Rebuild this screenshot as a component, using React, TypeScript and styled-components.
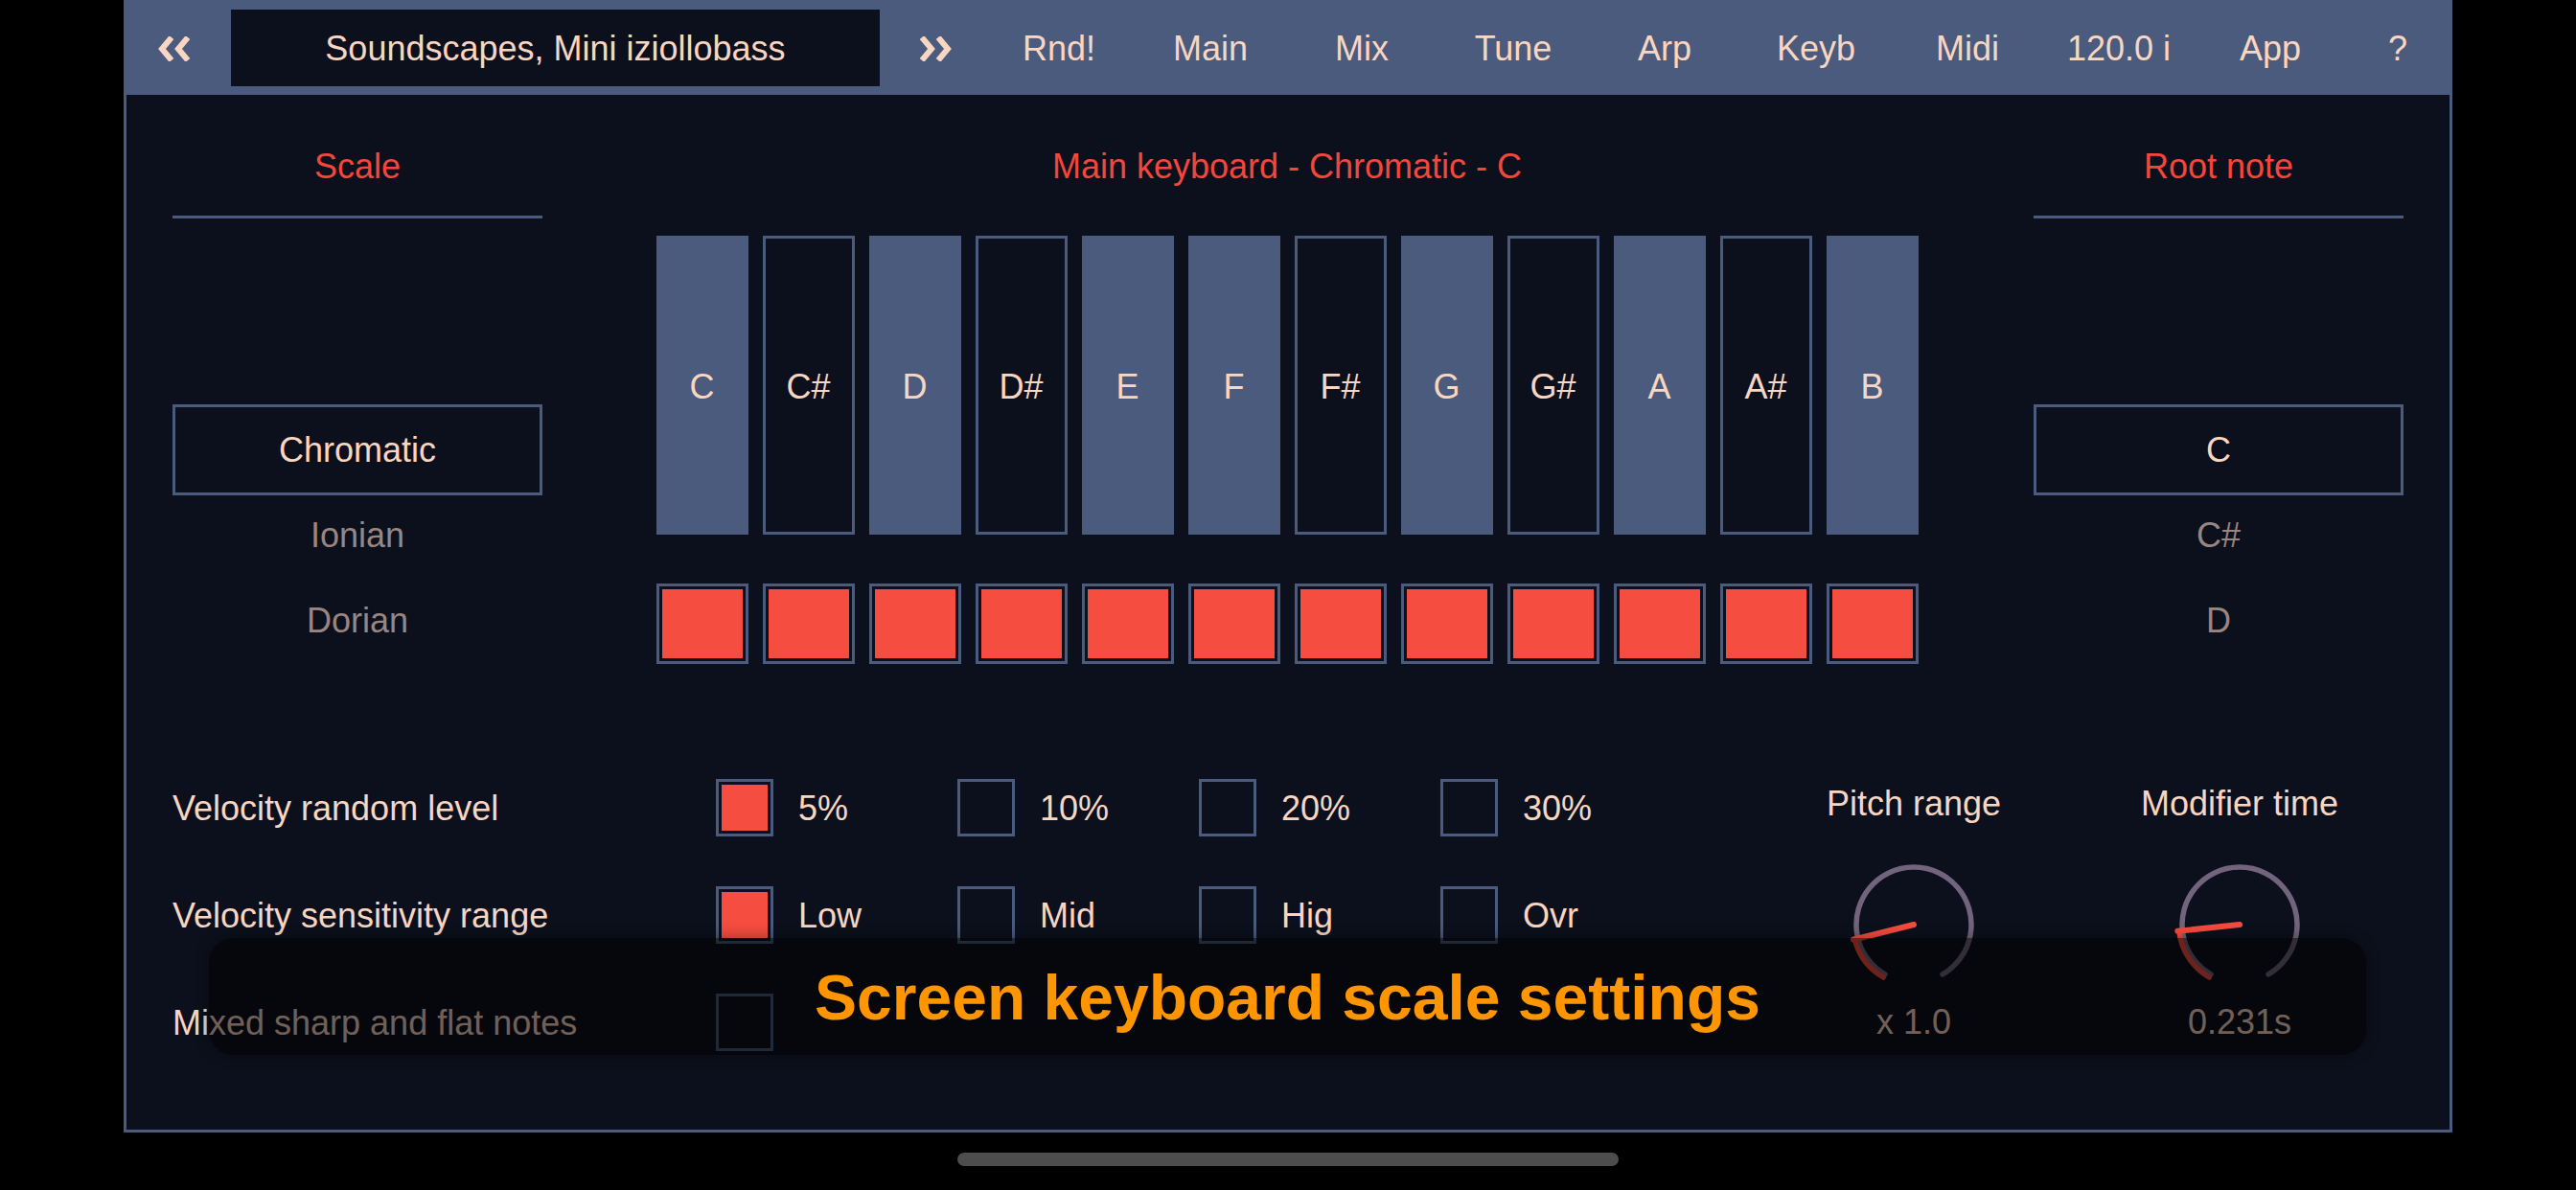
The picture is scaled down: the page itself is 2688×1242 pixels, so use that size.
import React from 'react';
import styled, { createGlobalStyle } from 'styled-components';

const BLUE = '#4a5b7d';
const BG = '#0c101c';
const PEACH = '#f8d6c2';
const RED = '#f4463a';
const PAD_RED = '#f54d3f';
const DIM = '#9a8580';

const GlobalStyle = createGlobalStyle`
  html, body { margin: 0; padding: 0; background: #000; }
  body {
    width: 2688px;
    height: 1242px;
    overflow: hidden;
    font-family: "Liberation Sans", Arial, Helvetica, sans-serif;
  }
  * { box-sizing: border-box; }
`;

const Screen = styled.div`
  width: 2688px;
  height: 1242px;
  background: #000;
  display: flex;
  flex-direction: column;
`;

const Frame = styled.div`
  position: relative;
  margin-left: 129px;
  width: 2430px;
  height: 1182px;
  border: 3px solid ${BLUE};
  border-top: none;
  background: ${BG};
  display: flex;
  flex-direction: column;
`;

const TopBar = styled.div`
  height: 99px;
  flex: none;
  background: ${BLUE};
  display: flex;
  align-items: center;
  padding-left: 31px;
`;

const Chevron = styled.svg`
  width: 37px;
  height: 26px;
  flex: none;
  margin-top: 2px;
`;

const TitleBox = styled.div`
  width: 677px;
  height: 80px;
  margin: 0 0 0 41px;
  background: ${BG};
  display: flex;
  align-items: center;
  justify-content: center;
  color: ${PEACH};
  font-size: 36px;
  padding-top: 2px;
  & + svg { margin-left: 40px; }
`;

const TabRow = styled.div`
  flex: 1;
  display: flex;
  margin-left: 31px;
  align-items: center;
  padding-top: 2px;
`;

const Tab = styled.div<{ $grow?: boolean }>`
  width: ${(p) => (p.$grow ? 'auto' : '158px')};
  flex: ${(p) => (p.$grow ? '1' : 'none')};
  text-align: center;
  color: ${PEACH};
  font-size: 36px;
  line-height: 42px;
`;

const Upper = styled.div`
  display: flex;
  justify-content: space-between;
  padding: 0 48px;
`;

const SideColumn = styled.div`
  width: 386px;
  display: flex;
  flex-direction: column;
`;

const SideHeader = styled.div`
  padding: 54px 0 30px;
  line-height: 42px;
  font-size: 36px;
  color: ${RED};
  text-align: center;
  border-bottom: 3px solid ${BLUE};
`;

const OptionList = styled.div`
  margin-top: 197px;
  padding: 0 3px;
  display: flex;
  flex-direction: column;
`;

const Option = styled.div<{ $selected?: boolean }>`
  height: 89px;
  display: flex;
  align-items: center;
  justify-content: center;
  font-size: 36px;
  color: ${(p) => (p.$selected ? PEACH : DIM)};
  outline: ${(p) => (p.$selected ? `3px solid ${BLUE}` : 'none')};
`;

const KeyboardColumn = styled.div`
  width: 1317px;
  margin-left: -2px;
  display: flex;
  flex-direction: column;
`;

const KeyboardTitle = styled.div`
  padding-top: 54px;
  line-height: 42px;
  font-size: 36px;
  color: ${RED};
  text-align: center;
`;

const KeyRow = styled.div`
  margin-top: 51px;
  display: grid;
  grid-template-columns: repeat(12, 96px);
  column-gap: 15px;
`;

const Key = styled.div<{ $sharp: boolean }>`
  height: 312px;
  display: flex;
  align-items: center;
  justify-content: center;
  padding-top: 4px;
  font-size: 36px;
  color: ${PEACH};
  background: ${(p) => (p.$sharp ? BG : BLUE)};
  border: ${(p) => (p.$sharp ? `3px solid ${BLUE}` : 'none')};
`;

const PadRow = styled.div`
  margin-top: 51px;
  display: grid;
  grid-template-columns: repeat(12, 96px);
  column-gap: 15px;
`;

const Pad = styled.div`
  height: 84px;
  border: 3px solid ${BLUE};
  padding: 3px;
  & > div {
    width: 100%;
    height: 100%;
    background: ${PAD_RED};
  }
`;

const Lower = styled.div`
  margin-top: 94px;
  display: flex;
  padding-left: 48px;
`;

const SettingsGrid = styled.div`
  display: grid;
  grid-template-columns: 567px repeat(4, 252px);
  grid-auto-rows: 112px;
  align-items: center;
`;

const RowLabel = styled.div`
  font-size: 36px;
  line-height: 42px;
  padding-top: 2px;
  color: ${PEACH};
  white-space: nowrap;
`;

const Choice = styled.div`
  display: flex;
  align-items: center;
  gap: 26px;
  font-size: 36px;
  color: ${PEACH};
  & > span { padding-top: 2px; }
`;

const CheckBox = styled.div<{ $on?: boolean }>`
  width: 60px;
  height: 60px;
  flex: none;
  border: 3px solid ${BLUE};
  padding: 3px;
  & > div {
    width: 100%;
    height: 100%;
    background: ${(p) => (p.$on ? PAD_RED : 'transparent')};
  }
`;

const KnobGroup = styled.div`
  display: flex;
  gap: 40px;
  margin-left: 92px;
`;

const KnobColumn = styled.div`
  width: 300px;
  display: flex;
  flex-direction: column;
  align-items: center;
`;

const KnobLabel = styled.div`
  margin-top: 31px;
  font-size: 36px;
  line-height: 42px;
  color: ${PEACH};
`;

const KnobSvg = styled.svg`
  margin-top: 30px;
  width: 150px;
  height: 150px;
`;

const KnobValue = styled.div`
  margin-top: 6px;
  font-size: 36px;
  line-height: 42px;
  color: ${PEACH};
`;

const Overlay = styled.div`
  position: absolute;
  left: 86px;
  top: 979px;
  width: 2251px;
  height: 122px;
  border-radius: 26px;
  background: rgba(0, 0, 0, 0.55);
  box-shadow: 0 0 14px 2px rgba(0, 0, 0, 0.3);
  display: flex;
  align-items: center;
  justify-content: center;
  padding-top: 2px;
  color: #ff9500;
  font-weight: bold;
  font-size: 66px;
`;

const HomeIndicator = styled.div`
  margin: 21px auto 0;
  width: 690px;
  height: 14px;
  border-radius: 7px;
  background: #4d4d4d;
`;

const polar = (cx: number, cy: number, r: number, deg: number) => {
  const a = (deg * Math.PI) / 180;
  return [cx + r * Math.sin(a), cy - r * Math.cos(a)];
};

const arcPath = (cx: number, cy: number, r: number, from: number, to: number) => {
  const [x1, y1] = polar(cx, cy, r, from);
  const [x2, y2] = polar(cx, cy, r, to);
  const large = to - from > 180 ? 1 : 0;
  return `M ${x1} ${y1} A ${r} ${r} 0 ${large} 1 ${x2} ${y2}`;
};

const Knob: React.FC<{ label: string; value: string; angle: number }> = ({ label, value, angle }) => {
  const c = 75;
  const [px, py] = polar(c, c, 65, angle);
  return (
    <KnobColumn>
      <KnobLabel>{label}</KnobLabel>
      <KnobSvg viewBox="0 0 150 150">
        <path d={arcPath(c, c, 60, -150, 150)} fill="none" stroke="#72647c" strokeWidth={5.5} strokeLinecap="round" />
        <path d={arcPath(c, c, 63.5, -150, angle)} fill="none" stroke="#f44c3e" strokeWidth={5.5} strokeLinecap="round" />
        <line x1={c} y1={c} x2={px} y2={py} stroke="#f44c3e" strokeWidth={6} strokeLinecap="round" />
      </KnobSvg>
      <KnobValue>{value}</KnobValue>
    </KnobColumn>
  );
};

const LeftChevron = () => (
  <Chevron viewBox="0 0 37 26">
    <polyline points="16,1 6,13 16,25" fill="none" stroke={PEACH} strokeWidth={6} strokeLinejoin="miter" />
    <polyline points="33,1 23,13 33,25" fill="none" stroke={PEACH} strokeWidth={6} strokeLinejoin="miter" />
  </Chevron>
);

const RightChevron = () => (
  <Chevron viewBox="0 0 37 26">
    <polyline points="4,1 14,13 4,25" fill="none" stroke={PEACH} strokeWidth={6} strokeLinejoin="miter" />
    <polyline points="21,1 31,13 21,25" fill="none" stroke={PEACH} strokeWidth={6} strokeLinejoin="miter" />
  </Chevron>
);

const notes = ['C', 'C#', 'D', 'D#', 'E', 'F', 'F#', 'G', 'G#', 'A', 'A#', 'B'];
const tabs = ['Rnd!', 'Main', 'Mix', 'Tune', 'Arp', 'Keyb', 'Midi', '120.0 i', 'App'];

const rows: { label: string; options: { text: string; on: boolean }[] }[] = [
  {
    label: 'Velocity random level',
    options: [
      { text: '5%', on: true },
      { text: '10%', on: false },
      { text: '20%', on: false },
      { text: '30%', on: false },
    ],
  },
  {
    label: 'Velocity sensitivity range',
    options: [
      { text: 'Low', on: true },
      { text: 'Mid', on: false },
      { text: 'Hig', on: false },
      { text: 'Ovr', on: false },
    ],
  },
  {
    label: 'Mixed sharp and flat notes',
    options: [{ text: '', on: false }],
  },
];

export default function App() {
  return (
    <Screen>
      <GlobalStyle />
      <Frame>
        <TopBar>
          <LeftChevron />
          <TitleBox>Soundscapes, Mini iziollobass</TitleBox>
          <RightChevron />
          <TabRow>
            {tabs.map((t) => (
              <Tab key={t}>{t}</Tab>
            ))}
            <Tab $grow>?</Tab>
          </TabRow>
        </TopBar>

        <Upper>
          <SideColumn>
            <SideHeader>Scale</SideHeader>
            <OptionList>
              <Option $selected>Chromatic</Option>
              <Option>Ionian</Option>
              <Option>Dorian</Option>
            </OptionList>
          </SideColumn>

          <KeyboardColumn>
            <KeyboardTitle>Main keyboard - Chromatic - C</KeyboardTitle>
            <KeyRow>
              {notes.map((n) => (
                <Key key={n} $sharp={n.includes('#')}>
                  {n}
                </Key>
              ))}
            </KeyRow>
            <PadRow>
              {notes.map((n) => (
                <Pad key={n}>
                  <div />
                </Pad>
              ))}
            </PadRow>
          </KeyboardColumn>

          <SideColumn>
            <SideHeader>Root note</SideHeader>
            <OptionList>
              <Option $selected>C</Option>
              <Option>C#</Option>
              <Option>D</Option>
            </OptionList>
          </SideColumn>
        </Upper>

        <Lower>
          <SettingsGrid>
            {rows.map((r) => (
              <React.Fragment key={r.label}>
                <RowLabel>{r.label}</RowLabel>
                {r.options.map((o, i) => (
                  <Choice key={i}>
                    <CheckBox $on={o.on}>
                      <div />
                    </CheckBox>
                    {o.text && <span>{o.text}</span>}
                  </Choice>
                ))}
                {Array.from({ length: 4 - r.options.length }).map((_, i) => (
                  <div key={`e${i}`} />
                ))}
              </React.Fragment>
            ))}
          </SettingsGrid>
          <KnobGroup>
            <Knob label="Pitch range" value="x 1.0" angle={-104} />
            <Knob label="Modifier time" value="0.231s" angle={-96} />
          </KnobGroup>
        </Lower>

        <Overlay>Screen keyboard scale settings</Overlay>
      </Frame>
      <HomeIndicator />
    </Screen>
  );
}
